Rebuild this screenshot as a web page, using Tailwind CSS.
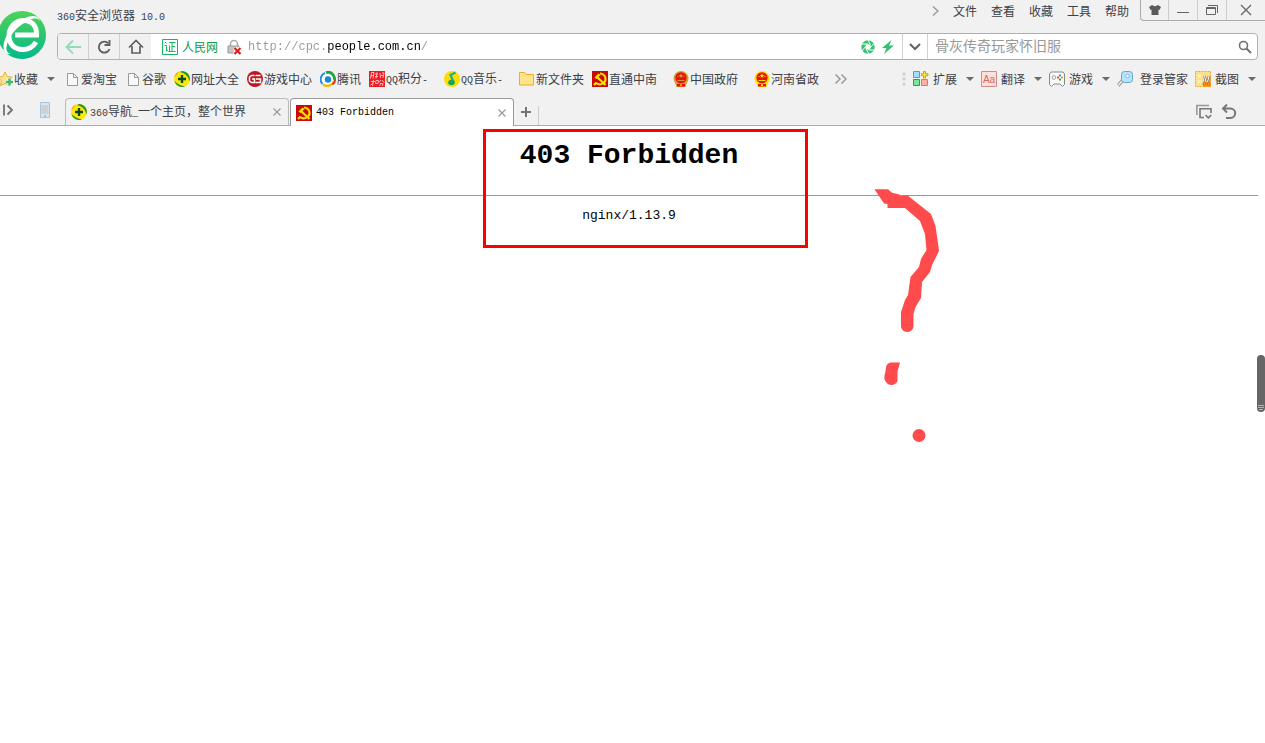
<!DOCTYPE html>
<html lang="zh-CN">

<head>
    <meta charset="UTF-8">
    <meta name="viewport" content="width=device-width, initial-scale=1.0">
    <title>403 Forbidden</title>
    <script src="https://cdn.jsdelivr.net/npm/@tailwindcss/browser@4"></script>
</head>

<body class="min-h-screen bg-white text-xs text-[#3c4046] font-['Noto_Sans_CJK_SC',sans-serif]">
    <!-- shared icons -->
    <svg class="hidden">
        <symbol id="caret" viewBox="0 0 8 4"><path d="M0 0h8L4 4z" fill="#6b6b6b" /></symbol>
        <symbol id="close" viewBox="0 0 8 8"><path d="M.5.5l7 7M7.5.5l-7 7" stroke="#999" stroke-width="1.2" /></symbol>
        <symbol id="doc" viewBox="0 0 16 16">
            <path d="M3.500 2.500h6l4 4v8h-10z" fill="#f8f8f8" stroke="#999" />
            <path d="M9.500 2.500v4h4" fill="none" stroke="#999" />
        </symbol>
        <symbol id="plus360" viewBox="0 0 16 16">
            <circle cx="8" cy="8" r="8" fill="#ffe60a" />
            <path d="M8 0a8 8 0 0 1 7.500 10.500C14.500 6 12 2.500 6 1z" fill="#1f9a35" />
            <path d="M.3 9.500A8 8 0 0 0 11 15.400C7 15 3 13 .3 9.500z" fill="#1f9a35" />
            <path d="M.3 6.500A8 8 0 0 1 5 .6L2.500 4z" fill="#f5a30a" />
            <path d="M8 4v8M4 8h8" stroke="#0b4a1c" stroke-width="2.400" />
        </symbol>
        <symbol id="party" viewBox="0 0 16 16">
            <path d="M0 0h16v16H0z" fill="#c90808" />
            <path d="M8 2.500c6 .5 7 7 3.500 9.500-2.500 1.800-5.500 1.500-7.500 0" fill="none" stroke="#ffe600" stroke-width="2" />
            <path d="M5 6l8.500 8M2 14l2.500-2.500" stroke="#ffe600" stroke-width="2.200" />
            <path d="M2.500 6.500l4-4 2 1.500-4 4z" fill="#ffe600" />
        </symbol>
        <symbol id="emblem" viewBox="0 0 16 16">
            <circle cx="8" cy="7.500" r="7.500" />
            <path d="M2 11h12l-1.500 5h-9z" />
            <circle cx="8" cy="6.800" r="5.600" fill="#e8120c" />
            <path d="M4 13h8v2.500H4z" fill="#e8120c" />
            <path d="M8 2.500l.8 1.600h1.500L9 5.200l.5 1.600L8 5.900l-1.500.9.500-1.600-1.300-1.100h1.500zM4.500 9h7v1h-7zM4.500 5h1v1h-1zM10.500 5h1v1h-1zM7 13h2v2H7z" />
        </symbol>
    </svg>

    <header class="bg-[#f1f1f1] border-b border-[#aaa]">
        <div class="flex">
            <div class="w-[57px] shrink-0 pt-[11px]">
                <svg class="w-[46px] h-12" viewBox="0 0 46 48">
                    <defs>
                        <linearGradient id="logo" x1="0" y1="0" x2="0" y2="1">
                            <stop offset="0" stop-color="#50d256" />
                            <stop offset="1" stop-color="#05b98c" />
                        </linearGradient>
                    </defs>
                    <circle cx="22" cy="24" r="24" fill="url(#logo)" />
                    <path d="M15 24h21.500C37 15 32 9.500 24 9.500 15 9.500 9 16 9 25c0 8 5.500 13.500 13.500 13.500 6 0 10.500-2.500 13.500-7.500" fill="none" stroke="#fff" stroke-width="5" />
                    <path d="M40 13c1-5-4-7-10-4C18 14 8 25 6.500 36c-.5 3 .5 6 4.500 7-5 .5-8-2.500-7.500-8C4.500 23 17 9 29 5.500c7-2 12 1 11 7.500z" fill="#fff" />
                </svg>
            </div>

            <div class="grow">
                <div class="flex h-[33px]">
                    <h2 class="pt-[6px] leading-[18px]"><span class="font-['Liberation_Mono',monospace] text-[10px]">360</span>安全浏览器<span class="font-['Liberation_Mono',monospace] text-[10px]"> 10.0</span></h2>
                    <nav class="ml-auto flex items-start gap-[14px] pt-[2px] pr-[11px] leading-[18px]">
                        <button class="h-[18px] flex items-center" aria-label="展开"><svg class="w-2 h-3" viewBox="0 0 8 12" fill="none" stroke="#999" stroke-width="1.500"><path d="M2 1.500L7 6l-5 4.500" /></svg></button>
                        <button>文件</button>
                        <button>查看</button>
                        <button>收藏</button>
                        <button>工具</button>
                        <button>帮助</button>
                    </nav>
                    <div class="flex h-[21px] border-l border-b border-[#aaa] rounded-bl-sm divide-x divide-[#ccc]">
                        <button class="w-7 flex items-center justify-center" aria-label="皮肤"><svg class="w-3 h-3" viewBox="0 0 12 12" fill="#5b5b5b"><path d="M3 1c1.500 1.500 4.500 1.500 6 0l3 2-1.500 3L9.500 5.500V11h-7V5.500L1.500 6 0 3z" /></svg></button>
                        <button class="w-[29px] flex items-center justify-center" aria-label="最小化"><svg class="w-3 h-3" viewBox="0 0 12 12"><path d="M0 8.500h12" stroke="#666" /></svg></button>
                        <button class="w-[29px] flex items-center justify-center" aria-label="还原"><svg class="w-3 h-3" viewBox="0 0 12 12" fill="none" stroke="#666"><path d="M2 1.500h9.500V9M.5 3.500h9v7h-9zM1 4.500h8" /></svg></button>
                        <button class="w-[38px] flex items-center justify-center" aria-label="关闭"><svg class="w-3 h-3" viewBox="0 0 12 12" stroke="#666" stroke-width="1.300"><path d="M1 1l10 10M11 1L1 11" /></svg></button>
                    </div>
                </div>

                <div class="mr-[7px] flex h-[27px] border border-[#b0b0b0] rounded-sm bg-white overflow-hidden">
                    <div class="flex bg-[#f1f1f1] divide-x divide-[#d0d0d0]">
                        <button class="w-[31px] flex items-center justify-center" aria-label="后退"><svg class="w-4 h-4" viewBox="0 0 16 16" fill="none" stroke="#94dab4" stroke-width="1.800"><path d="M16 8H1.500M8 1.500L1.500 8 8 14.500" /></svg></button>
                        <button class="w-[31px] flex items-center justify-center" aria-label="刷新"><svg class="w-4 h-4" viewBox="0 0 16 16" fill="none" stroke="#606060" stroke-width="1.900"><path d="M12.500 4.500a5.500 5.500 0 1 0 1 5.500" /><path d="M13.500 1v5H8.500" /></svg></button>
                        <button class="w-[31px] flex items-center justify-center" aria-label="主页"><svg class="w-4 h-4" viewBox="0 0 16 16" fill="none" stroke="#606060" stroke-width="1.700"><path d="M1 8.500l7-7 7 7M4 7v7h8V7" /></svg></button>
                    </div>
                    <div class="grow flex items-center pl-[11px]">
                        <svg class="w-4 h-4" viewBox="0 0 16 16" fill="none" stroke="#14b85a"><path d="M.5.5h15v15H.5z" /><path d="M3 3l1.500 1.500M2.500 6.500h2v5.500l1.500-1M7 3.500h6.500M10 3.500V12M10 7.500h3M7.500 6.500V12M6.500 12.500h7" /></svg>
                        <span class="ml-[4px] text-[#0a9a48]">人民网</span>
                        <svg class="ml-[9px] w-[15px] h-4" viewBox="0 0 15 16"><path d="M3.500 7V5a3.500 3.500 0 0 1 7 0v2" fill="none" stroke="#aaa" stroke-width="1.500" /><path d="M1 7h11v7H1z" fill="#c5c5c5" stroke="#999" /><path d="M7.500 9l6 6M13.500 9l-6 6" stroke="#fff" stroke-width="4" /><path d="M7.500 9l6 6M13.500 9l-6 6" stroke="#e01c1c" stroke-width="2.200" /></svg>
                        <input type="text" aria-label="地址" value="http://cpc.people.com.cn/"
                            class="grow ml-[6px] h-6 outline-none font-['Liberation_Mono',monospace] text-xs text-transparent bg-clip-text bg-[linear-gradient(90deg,#999_79px,#000_79px,#000_173px,#999_173px)]">
                        <button class="mr-[6px]" aria-label="极速模式"><svg class="w-[14px] h-[14px]" viewBox="0 0 14 14"><circle cx="7" cy="7" r="4.700" fill="none" stroke="#2fc46c" stroke-width="4" /><path d="M7 0l2.500 5M13 3.500L9 8M13 10H7.500M8 14L5 9M1 11l4-5M1 4h6" stroke="#fff" /></svg></button>
                        <button class="mr-[7px]" aria-label="加速"><svg class="w-[14px] h-[14px]" viewBox="0 0 14 14" fill="#2fc46c"><path d="M10.500 0L1 8h4.500L3 14l10-8.500H8z" /></svg></button>
                    </div>
                    <button class="w-[26px] border-x border-[#d0d0d0] flex items-center justify-center" aria-label="历史"><svg class="w-3 h-2" viewBox="0 0 12 8" fill="none" stroke="#606060" stroke-width="2"><path d="M1 1l5 5 5-5" /></svg></button>
                    <div class="w-[329px] flex items-center pl-[7px] pr-[5px]">
                        <input type="text" aria-label="搜索" placeholder="骨灰传奇玩家怀旧服" class="grow h-6 pb-1 outline-none text-sm placeholder:text-[#999]">
                        <button aria-label="搜索"><svg class="w-[14px] h-[14px]" viewBox="0 0 14 14" fill="none" stroke="#707070" stroke-width="1.600"><circle cx="5.500" cy="5.500" r="4" /><path d="M8.500 8.500L13 13" stroke-width="2" /></svg></button>
                    </div>
                </div>
            </div>
        </div>

        <div class="flex items-center h-[38px] leading-[18px] whitespace-nowrap">
            <button class="flex items-center gap-px w-16">
                <svg class="w-[13px] h-4" viewBox="0 0 13 16"><path d="M5 1l2.200 4.500 5 .7-3.600 3.500.9 5L5 12.300.5 14.700l.9-5L-2.200 6.200l5-.7z" fill="#ffe28a" stroke="#eeb02e" /><path d="M9.500 7.500v7M6 11h7" stroke="#fff" stroke-width="4" /><path d="M9.500 7.500v7M6 11h7" stroke="#3cb878" stroke-width="2.500" /></svg>
                <span>收藏</span>
                <svg class="ml-2 w-2 h-1"><use href="#caret" /></svg>
            </button>
            <nav class="flex items-center gap-2">
                <a href="#" class="flex items-center gap-px"><svg class="w-4 h-4"><use href="#doc" /></svg>爱淘宝</a>
                <a href="#" class="flex items-center gap-px"><svg class="w-4 h-4"><use href="#doc" /></svg>谷歌</a>
                <a href="#" class="flex items-center gap-px"><svg class="w-4 h-4"><use href="#plus360" /></svg>网址大全</a>
                <a href="#" class="flex items-center gap-px"><svg class="w-4 h-4" viewBox="0 0 16 16"><circle cx="8" cy="8" r="8" fill="#bd1622" /><path d="M7.500 4.500H4.500L2.500 6v4l2 1.500h3V8H5M8.500 4.500h5M9 8h4.500v3.500H8.500" fill="none" stroke="#fff" stroke-width="1.500" /></svg>游戏中心</a>
                <a href="#" class="flex items-center gap-px"><svg class="w-4 h-4" viewBox="0 0 16 16"><circle cx="8" cy="8" r="8" fill="#fff" /><g fill="none"><path d="M2.500 13A7 7 0 0 1 5 1.800" stroke="#1f8fe0" stroke-width="2" /><path d="M6 1.500c5-1.500 9 3 8.500 7.500" stroke="#1da838" stroke-width="3" /><path d="M14 10c-1 4-7 6.500-11 3.500" stroke="#f2b90c" stroke-width="2.400" /><path d="M15 9c0 2-1 3.500-2.500 4.500" stroke="#e62e22" stroke-width="2" /></g><circle cx="8" cy="8.500" r="3.200" fill="#1687d9" /></svg>腾讯</a>
                <a href="#" class="flex items-center gap-px"><svg class="w-4 h-4" viewBox="0 0 16 16"><path d="M0 0h16v16H0z" fill="#ed1c24" /><path d="M2.500 1.500h2.500L4 7.500M2.500 1.500L1.500 7.500M2 4.500h3M6 3h3M6 5.500h3M8 1.500l-1 6M11 2l.5 5M13 2h2l-1 5M12 4.500h3M2 10.500h4M4.500 9l-1 6M1.500 14l3-2M7 9.500h2.500l-.5 3H6.500zM12 9l-2 2.500M13 9l2 2.500M11 12.500h3l-.5 2.500M12 12.500L10.500 15" stroke="#ffc9c9" fill="none" stroke-width=".9" /></svg><span class="w-[50px]"><span class="font-['Liberation_Mono',monospace] text-[10px]">QQ</span>积分<span class="font-['Liberation_Mono',monospace] text-[10px]">-</span></span></a>
                <a href="#" class="flex items-center gap-px"><svg class="w-4 h-4" viewBox="0 0 16 16"><circle cx="8" cy="8" r="8" fill="#ffdc00" /><path d="M11.500 1.500L6.500 4l3 7" fill="none" stroke="#17b08b" stroke-width="2.200" /><ellipse cx="7.500" cy="11.500" rx="3.300" ry="2.800" fill="#17a65c" /></svg><span class="w-[50px]"><span class="font-['Liberation_Mono',monospace] text-[10px]">QQ</span>音乐<span class="font-['Liberation_Mono',monospace] text-[10px]">-</span></span></a>
                <a href="#" class="flex items-center gap-px"><svg class="w-4 h-4" viewBox="0 0 16 16"><path d="M.5 1.500h5l1.500 2h7.500v10.500H.5z" fill="#ffe48c" stroke="#e8ae2c" /></svg>新文件夹</a>
                <a href="#" class="flex items-center gap-px"><svg class="w-4 h-4"><use href="#party" /></svg><span class="w-14">直通中南</span></a>
                <a href="#" class="flex items-center gap-px"><svg class="w-4 h-4 text-[#d99a35]" fill="currentColor"><use href="#emblem" /></svg><span class="w-14">中国政府</span></a>
                <a href="#" class="flex items-center gap-px"><svg class="w-4 h-4 text-[#ffe100]" fill="currentColor"><use href="#emblem" /></svg><span class="w-14">河南省政</span></a>
                <button aria-label="更多"><svg class="w-3 h-3" viewBox="0 0 12 12" fill="none" stroke="#999" stroke-width="1.500"><path d="M.5 1.500L5 6 .5 10.500M6.500 1.500L11 6l-4.500 4.500" /></svg></button>
            </nav>

            <div class="ml-auto mr-[9px] flex items-center gap-[7px]">
                <svg class="w-1 h-4" viewBox="0 0 4 16" fill="#ccc"><circle cx="2" cy="3" r="1.500" /><circle cx="2" cy="8" r="1.500" /><circle cx="2" cy="13" r="1.500" /></svg>
                <button class="flex items-center gap-1"><svg class="w-4 h-4" viewBox="0 0 16 16"><path d="M.5.5h6v6h-6z" fill="#a0e0ff" stroke="#3aa5e4" /><path d="M.5 8.500h6v6h-6z" fill="#79e69a" stroke="#16ab4c" /><path d="M8.500 8.500h6v6h-6z" fill="#ffb1a2" stroke="#f56f59" /><path d="M10.500.5h2v2.200h2.500v2h-2.500V7h-2V4.700H8.300v-2h2.200z" fill="#ffe53b" stroke="#e39b00" /></svg>扩展<svg class="ml-[5px] w-2 h-1"><use href="#caret" /></svg></button>
                <button class="flex items-center gap-1"><svg class="w-4 h-4" viewBox="0 0 16 16"><path d="M.5.5h15v15H.5z" fill="#ffdfda" stroke="#d48b84" /><text x="8" y="12" font-size="10" text-anchor="middle" fill="#cf6a65" font-family="Liberation Sans">Aa</text></svg>翻译<svg class="ml-[5px] w-2 h-1"><use href="#caret" /></svg></button>
                <button class="flex items-center gap-1"><svg class="w-4 h-4" viewBox="0 0 16 16"><path d="M2 1h12l1.500 2v10.500l-2 2-2.500-2.500H5l-2.500 2.500-2-2V3z" fill="#fafafa" stroke="#888" /><circle cx="4.800" cy="6.500" r="1.800" fill="none" stroke="#999" /><path d="M10 3.500h2v2h-2z" fill="#2f9be8" /><path d="M8 5.500h2v2H8z" fill="#f44" /><path d="M12 5.500h2v2h-2z" fill="#f6a400" /><path d="M10 7.500h2v2h-2z" fill="#1fae57" /></svg>游戏<svg class="ml-[5px] w-2 h-1"><use href="#caret" /></svg></button>
                <button class="flex items-center gap-[7px]"><svg class="w-4 h-4" viewBox="0 0 16 16"><path d="M6 9l-5 5.500" stroke="#999" stroke-width="3.500" /><path d="M6 9l-5 5.500" stroke="#eee" stroke-width="1.500" /><rect x="4.500" y=".5" width="11" height="11" rx="3" fill="#b8e4fb" stroke="#63a6cc" /><circle cx="10.500" cy="5" r="1.800" fill="#fff" stroke="#78b8dc" /></svg>登录管家</button>
                <button class="flex items-center gap-1"><svg class="w-4 h-4" viewBox="0 0 16 16"><path d="M.5.5h15v15H.5z" fill="#ffe08a" stroke="#f6a621" stroke-dasharray="2 1" /><circle cx="4.500" cy="5" r="1.800" fill="#fff3c0" /><circle cx="4.500" cy="10.500" r="1.800" fill="#fff3c0" /><path d="M16 5v11H8v-5z" fill="#f5a02a" /><path d="M9.500 5l1.500 6M14 5l-1.500 6" stroke="#777" stroke-width="2.500" /><path d="M9.500 5l1.500 6M14 5l-1.500 6" stroke="#fff" /><circle cx="9.500" cy="13" r="1.500" fill="none" stroke="#d96a00" /><circle cx="13.500" cy="13" r="1.500" fill="none" stroke="#d96a00" /></svg>截图<svg class="ml-[5px] w-2 h-1"><use href="#caret" /></svg></button>
            </div>
        </div>

        <div class="flex h-[27px] leading-[18px]">
            <div class="w-[65px] shrink-0 flex items-center gap-[26px] pb-[3px] pl-[3px]">
                <button aria-label="侧边栏"><svg class="w-[11px] h-3" viewBox="0 0 11 12" fill="none" stroke="#707070" stroke-width="1.800"><path d="M1 .5v11M4.500 1.500L9 6l-4.500 4.500" /></svg></button>
                <button aria-label="手机"><svg class="w-[10px] h-4" viewBox="0 0 10 16"><path d="M.5.5h9v15h-9z" fill="#d5e6f5" stroke="#a8c3de" /><path d="M1.500 3h7v9h-7z" fill="#d0d0d0" /><path d="M4 14h2" stroke="#7d9cba" /></svg></button>
            </div>
            <button class="w-56 flex items-center border border-b-0 border-[#bbb] rounded-t-sm pl-[5px] pr-[7px]">
                <svg class="w-4 h-4 mr-[3px]"><use href="#plus360" /></svg>
                <span><span class="font-['Liberation_Mono',monospace] text-[10px]">360</span>导航<span class="font-['Liberation_Mono',monospace] text-[10px]">_</span>一个主页，整个世界</span>
                <svg class="ml-auto w-2 h-2"><use href="#close" /></svg>
            </button>
            <button class="ml-px w-56 -mb-px flex items-center border border-b-0 border-[#999] rounded-t-sm bg-white pl-[5px] pr-[7px] text-black">
                <svg class="w-4 h-4 mr-[4px]"><use href="#party" /></svg>
                <span class="font-['Liberation_Mono',monospace] text-[10px]">403 Forbidden</span>
                <svg class="ml-auto w-2 h-2"><use href="#close" /></svg>
            </button>
            <button class="w-[25px] mt-2 flex items-center justify-center border-r border-[#ccc] pb-2" aria-label="新标签页"><svg class="w-[10px] h-[10px]" viewBox="0 0 10 10" stroke="#757575" stroke-width="2"><path d="M5 0v10M0 5h10" /></svg></button>
            <div class="ml-auto mr-7 flex items-center gap-[9px]">
                <button aria-label="标签列表"><svg class="w-4 h-4" viewBox="0 0 16 16" fill="none" stroke="#777" stroke-width="1.600"><path d="M.8 11V1.500H13" stroke="#999" /><path d="M8 13.500H4V4.800h11V9M9.500 11l2.800 2.800L15.200 11" /></svg></button>
                <button aria-label="恢复标签"><svg class="w-4 h-4" viewBox="0 0 16 16" fill="none" stroke="#777" stroke-width="2"><path d="M2 4.500h7.500a4.700 4.700 0 0 1 0 9.400H5M6 .5l-4 4 4 4" /></svg></button>
            </div>
        </div>
    </header>

    <main class="relative mr-[7px] text-center text-black font-['Liberation_Mono',monospace]">
        <h1 class="h-[69px] pt-[10px] text-[28px] leading-10 font-bold">403 Forbidden</h1>
        <hr class="border-[#999]">
        <p class="pt-2 text-[13px] leading-6">nginx/1.13.9</p>

        <!-- markup drawn over the page -->
        <div class="absolute left-[483px] top-[3px] w-[325px] h-[119px] border-3 border-[#ff0000]"></div>
        <svg class="absolute left-[860px] top-[54px] w-[100px] h-[270px]" viewBox="0 0 100 270" fill="#ff4b4b">
            <path d="M14.500 9.300H28l4 3.400 7.500 1.800V16l7.500-1L71 34l4.500 12 2 14L79 71l-7 14-2 7-8 10-1 16-5.500 9-2 7v11a6.300 6.300 0 1 1-12.500 0v-13l4-12 3-5 2.500-18 8.500-10 2-8 5.500-9-1.500-16-5-13-15-13H27.500v-4l-3.500-.5z" />
            <path d="M30.500 182.500h9.500l-2.500 9v9.500a6.500 6.500 0 0 1-11.500 1c-2-2-2-6-1-8l1-6c0-3 2-5 4.500-5.500z" />
            <circle cx="59" cy="255.500" r="6.500" />
        </svg>
    </main>

    <div class="absolute right-0 top-[355px] w-2 h-[57px] rounded-full bg-[#666] flex flex-col items-center justify-end gap-px pb-[2px]">
        <span class="w-[6px] h-px bg-[#b5b5b5]"></span>
        <span class="w-[6px] h-px bg-[#b5b5b5]"></span>
        <span class="w-1 h-px bg-[#b5b5b5]"></span>
    </div>
</body>

</html>
